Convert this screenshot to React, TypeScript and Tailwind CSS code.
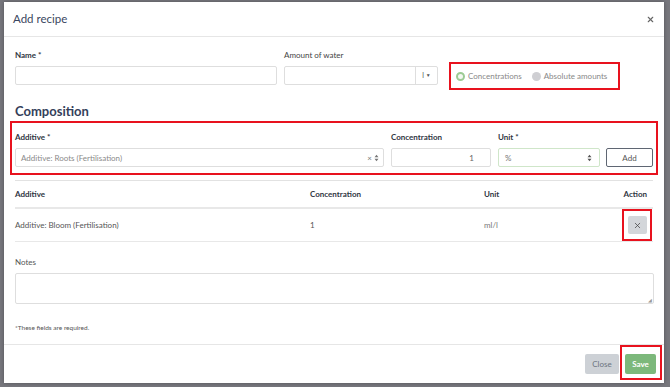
import { X } from "lucide-react";

const label = "text-[8px] leading-[10px] font-bold text-[#2f3542]";
const input = "h-[19px] border border-[#dedede] rounded-[2px] bg-white";

function Updown({ className }: { className?: string }) {
  return (
    <svg width="5" height="8" viewBox="0 0 5 8" className={className}>
      <path d="M0.5 3.2 L2.5 0.8 L4.5 3.2 Z M0.5 4.8 L2.5 7.2 L4.5 4.8 Z" fill="currentColor" />
    </svg>
  );
}

export default function App() {
  return (
    <div className="w-[670px] h-[387px] bg-[#77777d] overflow-hidden pt-[2px] pl-[4px]" style={{ fontFamily: "Lato, 'Open Sans', sans-serif" }}>
      <div className="w-[660px] h-[381px] bg-white flex flex-col shadow-[0_0_4px_rgba(0,0,0,0.3)]">
        {/* header */}
        <div className="h-[35px] border-b border-[#e6e6e6] flex items-center justify-between pl-[9px] pr-[9px] shrink-0">
          <span className="text-[11.5px] text-[#3a4660]">Add recipe</span>
          <X size={9} strokeWidth={3} className="text-[#666]" />
        </div>

        {/* body */}
        <div className="h-[307px] shrink-0 pl-[11px] pr-[6px] pt-[13px]">
          <div className="flex items-start">
            <div className="flex flex-col w-[262px]">
              <span className={label}>Name *</span>
              <div className={`${input} mt-[6px]`} />
            </div>
            <div className="flex flex-col ml-[7px] w-[154px]">
              <span className="text-[8px] leading-[10px] text-[#444]">Amount of water</span>
              <div className={`${input} mt-[6px] flex justify-end`}>
                <div className="w-[22px] border-l border-[#dedede] flex items-center justify-center gap-[2px] text-[7px] text-[#555]">
                  <span>l</span>
                  <span className="text-[5px]">▼</span>
                </div>
              </div>
            </div>
            <div className="ml-[11px] mt-[12px] w-[171px] h-[28px] border-2 border-[#e8121e] flex items-center pl-[5px] text-[8px] text-[#888]">
              <span className="w-[9px] h-[9px] rounded-full border-[2.5px] border-[#9ccb94] bg-[#f4f8f2]" />
              <span className="ml-[3px]">Concentrations</span>
              <span className="ml-[10px] w-[9px] h-[9px] rounded-full bg-[#cfcfd3]" />
              <span className="ml-[3px]">Absolute amounts</span>
            </div>
          </div>

          <div className="mt-[13px] text-[13px] leading-[16px] font-bold text-[#34405a]">Composition</div>

          <div className="mt-[2px] -ml-[5px] w-[648px] h-[54px] border-2 border-[#e8121e] pt-[9px] pl-[3px] pr-[3px] flex items-start gap-[7px]">
            <div className="flex flex-col w-[369px]">
              <span className={label}>Additive *</span>
              <div className={`${input} mt-[6px] flex items-center justify-between pl-[5px] pr-[4px]`}>
                <span className="text-[8px] text-[#8a8a8a]">Additive: Roots (Fertilisation)</span>
                <span className="flex items-center gap-[2px] text-[#777]">
                  <span className="text-[8px] leading-[8px]">×</span>
                  <Updown />
                </span>
              </div>
            </div>
            <div className="flex flex-col w-[100px]">
              <span className={label}>Concentration</span>
              <div className={`${input} mt-[6px] flex items-center justify-end pr-[16px] text-[8px] text-[#666]`}>1</div>
            </div>
            <div className="flex flex-col w-[102px]">
              <span className={label}>Unit *</span>
              <div className="h-[19px] mt-[6px] border-[1.5px] border-[#cfe6c9] rounded-[2px] flex items-center justify-between pl-[6px] pr-[7px] text-[8px] text-[#777]">
                <span>%</span>
                <Updown className="text-[#555]" />
              </div>
            </div>
            <div className="mt-[16px] ml-[-1px] w-[47px] h-[19px] border border-[#5f6673] rounded-[2px] flex items-center justify-center text-[8px] text-[#555]">Add</div>
          </div>

          <div className="mt-[5px] w-[638px] border-t border-[#e2e2e2]" />

          <div className="w-[638px]">
            <div className="grid grid-cols-[295px_174px_1fr_40px] pt-[8px] pb-[8px] border-b-2 border-[#e8e8e8] text-[8px] leading-[10px] font-bold text-[#2f3542]">
              <span>Additive</span>
              <span>Concentration</span>
              <span>Unit</span>
              <span className="text-right pr-[6px]">Action</span>
            </div>
            <div className="grid grid-cols-[295px_174px_1fr_40px] items-center h-[33px] border-b border-[#e8e8e8] text-[8px] text-[#555]">
              <span>Additive: Bloom (Fertilisation)</span>
              <span>1</span>
              <span className="text-[#777]">ml/l</span>
              <div className="flex justify-end pr-[1px]">
                <div className="w-[30px] h-[32px] border-2 border-[#e8121e] flex items-center justify-center">
                  <div className="w-[19px] h-[18px] rounded-[2px] bg-[#d3d6da] flex items-center justify-center">
                    <X size={9} strokeWidth={2} className="text-[#444]" />
                  </div>
                </div>
              </div>
            </div>
          </div>

          <div className="mt-[15px] text-[8px] leading-[10px] text-[#555]">Notes</div>
          <div className="mt-[6px] w-[639px] h-[31px] border border-[#dedede] rounded-[2px] relative">
            <span className="absolute right-[1px] bottom-[0px] text-[5px] text-[#999] leading-[5px]">◢</span>
          </div>
          <div className="mt-[20px] text-[6.5px] leading-[8px] text-[#555]">*These fields are required.</div>
        </div>

        {/* footer */}
        <div className="flex-1 border-t border-[#e6e6e6] flex items-start justify-end pr-[2px]">
          <div className="mt-[9px] mr-[1px] w-[34px] h-[20px] rounded-[2px] bg-[#cdd1d6] text-[8px] text-[#6c7480] flex items-center justify-center">Close</div>
          <div className="w-[42px] h-[35px] border-2 border-[#e8121e] pt-[7px] pl-[3px]">
            <div className="w-[31px] h-[20px] rounded-[2px] bg-[#7cb87b] text-[8px] text-white font-bold flex items-center justify-center">Save</div>
          </div>
        </div>
      </div>
    </div>
  );
}
